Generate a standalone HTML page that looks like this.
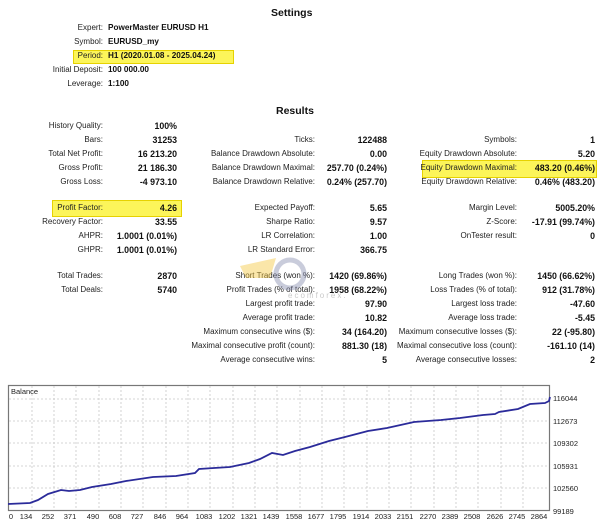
<!DOCTYPE html>
<html><head><meta charset="utf-8"><style>
body{margin:0;width:600px;height:530px;background:#fff;position:relative;overflow:hidden;font-family:"Liberation Sans","DejaVu Sans",sans-serif;font-size:8px;color:#111}
.t{position:absolute;white-space:nowrap;line-height:12px}
.l{text-align:right;color:#222;font-size:8px}
.v{font-weight:bold;color:#111;font-size:8.8px}
.s{font-size:8.2px}
.h{font-weight:bold;font-size:10.5px}
.hl{position:absolute;background:#fcf55a;border:1px solid #e6d200}
</style></head><body>
<div class="hl" style="left:73px;top:50px;width:159px;height:12px"></div>
<div class="hl" style="left:52px;top:200px;width:128px;height:15px"></div>
<div class="hl" style="left:422px;top:160px;width:173px;height:16px"></div>

<div class="t h" style="left:271px;top:7px">Settings</div>
<div class="t l" style="right:497px;top:22px">Expert:</div><div class="t v s" style="left:108px;top:22px">PowerMaster EURUSD H1</div>
<div class="t l" style="right:497px;top:36px">Symbol:</div><div class="t v s" style="left:108px;top:36px">EURUSD_my</div>
<div class="t l" style="right:497px;top:50px">Period:</div><div class="t v s" style="left:108px;top:50px">H1 (2020.01.08 - 2025.04.24)</div>
<div class="t l" style="right:497px;top:64px">Initial Deposit:</div><div class="t v s" style="left:108px;top:64px">100 000.00</div>
<div class="t l" style="right:497px;top:78px">Leverage:</div><div class="t v s" style="left:108px;top:78px">1:100</div>

<div class="t h" style="left:276px;top:105px">Results</div>

<div class="t l" style="right:497px;top:120px">History Quality:</div><div class="t v" style="right:423px;top:120px">100%</div>
<div class="t l" style="right:497px;top:134px">Bars:</div><div class="t v" style="right:423px;top:134px">31253</div>
<div class="t l" style="right:497px;top:148px">Total Net Profit:</div><div class="t v" style="right:423px;top:148px">16 213.20</div>
<div class="t l" style="right:497px;top:162px">Gross Profit:</div><div class="t v" style="right:423px;top:162px">21 186.30</div>
<div class="t l" style="right:497px;top:176px">Gross Loss:</div><div class="t v" style="right:423px;top:176px">-4 973.10</div>
<div class="t l" style="right:497px;top:202px">Profit Factor:</div><div class="t v" style="right:423px;top:202px">4.26</div>
<div class="t l" style="right:497px;top:216px">Recovery Factor:</div><div class="t v" style="right:423px;top:216px">33.55</div>
<div class="t l" style="right:497px;top:230px">AHPR:</div><div class="t v" style="right:423px;top:230px">1.0001 (0.01%)</div>
<div class="t l" style="right:497px;top:244px">GHPR:</div><div class="t v" style="right:423px;top:244px">1.0001 (0.01%)</div>
<div class="t l" style="right:497px;top:270px">Total Trades:</div><div class="t v" style="right:423px;top:270px">2870</div>
<div class="t l" style="right:497px;top:284px">Total Deals:</div><div class="t v" style="right:423px;top:284px">5740</div>

<div class="t l" style="right:285px;top:134px">Ticks:</div><div class="t v" style="right:213px;top:134px">122488</div>
<div class="t l" style="right:285px;top:148px">Balance Drawdown Absolute:</div><div class="t v" style="right:213px;top:148px">0.00</div>
<div class="t l" style="right:285px;top:162px">Balance Drawdown Maximal:</div><div class="t v" style="right:213px;top:162px">257.70 (0.24%)</div>
<div class="t l" style="right:285px;top:176px">Balance Drawdown Relative:</div><div class="t v" style="right:213px;top:176px">0.24% (257.70)</div>
<div class="t l" style="right:285px;top:202px">Expected Payoff:</div><div class="t v" style="right:213px;top:202px">5.65</div>
<div class="t l" style="right:285px;top:216px">Sharpe Ratio:</div><div class="t v" style="right:213px;top:216px">9.57</div>
<div class="t l" style="right:285px;top:230px">LR Correlation:</div><div class="t v" style="right:213px;top:230px">1.00</div>
<div class="t l" style="right:285px;top:244px">LR Standard Error:</div><div class="t v" style="right:213px;top:244px">366.75</div>
<div class="t l" style="right:285px;top:270px">Short Trades (won %):</div><div class="t v" style="right:213px;top:270px">1420 (69.86%)</div>
<div class="t l" style="right:285px;top:284px">Profit Trades (% of total):</div><div class="t v" style="right:213px;top:284px">1958 (68.22%)</div>
<div class="t l" style="right:285px;top:298px">Largest profit trade:</div><div class="t v" style="right:213px;top:298px">97.90</div>
<div class="t l" style="right:285px;top:312px">Average profit trade:</div><div class="t v" style="right:213px;top:312px">10.82</div>
<div class="t l" style="right:285px;top:326px">Maximum consecutive wins ($):</div><div class="t v" style="right:213px;top:326px">34 (164.20)</div>
<div class="t l" style="right:285px;top:340px">Maximal consecutive profit (count):</div><div class="t v" style="right:213px;top:340px">881.30 (18)</div>
<div class="t l" style="right:285px;top:354px">Average consecutive wins:</div><div class="t v" style="right:213px;top:354px">5</div>

<div class="t l" style="right:83px;top:134px">Symbols:</div><div class="t v" style="right:5px;top:134px">1</div>
<div class="t l" style="right:83px;top:148px">Equity Drawdown Absolute:</div><div class="t v" style="right:5px;top:148px">5.20</div>
<div class="t l" style="right:83px;top:162px">Equity Drawdown Maximal:</div><div class="t v" style="right:5px;top:162px">483.20 (0.46%)</div>
<div class="t l" style="right:83px;top:176px">Equity Drawdown Relative:</div><div class="t v" style="right:5px;top:176px">0.46% (483.20)</div>
<div class="t l" style="right:83px;top:202px">Margin Level:</div><div class="t v" style="right:5px;top:202px">5005.20%</div>
<div class="t l" style="right:83px;top:216px">Z-Score:</div><div class="t v" style="right:5px;top:216px">-17.91 (99.74%)</div>
<div class="t l" style="right:83px;top:230px">OnTester result:</div><div class="t v" style="right:5px;top:230px">0</div>
<div class="t l" style="right:83px;top:270px">Long Trades (won %):</div><div class="t v" style="right:5px;top:270px">1450 (66.62%)</div>
<div class="t l" style="right:83px;top:284px">Loss Trades (% of total):</div><div class="t v" style="right:5px;top:284px">912 (31.78%)</div>
<div class="t l" style="right:83px;top:298px">Largest loss trade:</div><div class="t v" style="right:5px;top:298px">-47.60</div>
<div class="t l" style="right:83px;top:312px">Average loss trade:</div><div class="t v" style="right:5px;top:312px">-5.45</div>
<div class="t l" style="right:83px;top:326px">Maximum consecutive losses ($):</div><div class="t v" style="right:5px;top:326px">22 (-95.80)</div>
<div class="t l" style="right:83px;top:340px">Maximal consecutive loss (count):</div><div class="t v" style="right:5px;top:340px">-161.10 (14)</div>
<div class="t l" style="right:83px;top:354px">Average consecutive losses:</div><div class="t v" style="right:5px;top:354px">2</div>

<svg style="position:absolute;left:236px;top:252px;opacity:.45" width="110" height="50">
<path d="M4 14 L40 6 L34 26 L10 26 Z" fill="#f5c842"/>
<circle cx="54" cy="22" r="14" fill="none" stroke="#8a8fb0" stroke-width="5"/>
<text x="52" y="46" font-size="8" fill="#888" font-family="Liberation Sans,sans-serif" letter-spacing="2">ecomforex.com</text>
</svg>

<svg style="position:absolute;left:0;top:380px" width="600" height="150" font-family="Liberation Sans,sans-serif" font-size="7.5">
<rect x="8.5" y="5.5" width="541" height="125" fill="#fff" stroke="#777" stroke-width="1.2"/>
<g stroke="#c8c8c8" stroke-dasharray="2,2" stroke-width="0.8">
<line x1="9" x2="549" y1="19" y2="19"/><line x1="9" x2="549" y1="41" y2="41"/><line x1="9" x2="549" y1="63" y2="63"/><line x1="9" x2="549" y1="86" y2="86"/><line x1="9" x2="549" y1="108" y2="108"/>
</g>
<g stroke="#c8c8c8" stroke-dasharray="2,2" stroke-width="0.8">
<line x1="32" x2="32" y1="6" y2="130"/><line x1="54" x2="54" y1="6" y2="130"/><line x1="76" x2="76" y1="6" y2="130"/><line x1="99" x2="99" y1="6" y2="130"/><line x1="121" x2="121" y1="6" y2="130"/><line x1="143" x2="143" y1="6" y2="130"/><line x1="166" x2="166" y1="6" y2="130"/><line x1="188" x2="188" y1="6" y2="130"/><line x1="210" x2="210" y1="6" y2="130"/><line x1="233" x2="233" y1="6" y2="130"/><line x1="255" x2="255" y1="6" y2="130"/><line x1="277" x2="277" y1="6" y2="130"/><line x1="300" x2="300" y1="6" y2="130"/><line x1="322" x2="322" y1="6" y2="130"/><line x1="344" x2="344" y1="6" y2="130"/><line x1="367" x2="367" y1="6" y2="130"/><line x1="389" x2="389" y1="6" y2="130"/><line x1="411" x2="411" y1="6" y2="130"/><line x1="434" x2="434" y1="6" y2="130"/><line x1="456" x2="456" y1="6" y2="130"/><line x1="478" x2="478" y1="6" y2="130"/><line x1="501" x2="501" y1="6" y2="130"/><line x1="523" x2="523" y1="6" y2="130"/>
</g>
<text x="11" y="14" fill="#222">Balance</text>
<polyline fill="none" stroke="#2b2b9a" stroke-width="1.8" points="8,124 30,123 38,120 48,114 61,110 69,111 80,110 92,107 111,104 126,101 153,97 176,96 195,93 199,89 214,88 230,87 249,83 260,79 272,73 283,75 295,71 310,67 329,61 345,57 368,51 387,48 414,42 441,40 460,38 483,35 495,34 499,32 518,29 530,24 545,23 549,21 550,17"/>
<g fill="#222">
<text x="553" y="21">116044</text><text x="553" y="44">112673</text><text x="553" y="66">109302</text><text x="553" y="89">105931</text><text x="553" y="111">102560</text><text x="553" y="134">99189</text>
</g>
<g fill="#222" text-anchor="middle">
<text x="11" y="139">0</text><text x="26" y="139">134</text><text x="48" y="139">252</text><text x="70" y="139">371</text><text x="93" y="139">490</text><text x="115" y="139">608</text><text x="137" y="139">727</text><text x="160" y="139">846</text><text x="182" y="139">964</text><text x="204" y="139">1083</text><text x="227" y="139">1202</text><text x="249" y="139">1321</text><text x="271" y="139">1439</text><text x="294" y="139">1558</text><text x="316" y="139">1677</text><text x="338" y="139">1795</text><text x="361" y="139">1914</text><text x="383" y="139">2033</text><text x="405" y="139">2151</text><text x="428" y="139">2270</text><text x="450" y="139">2389</text><text x="472" y="139">2508</text><text x="495" y="139">2626</text><text x="517" y="139">2745</text><text x="539" y="139">2864</text>
</g>
</svg>
</body></html>
